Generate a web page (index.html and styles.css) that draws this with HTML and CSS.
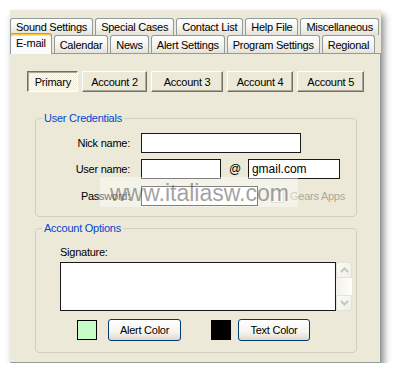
FILE: index.html
```html
<!DOCTYPE html>
<html>
<head>
<meta charset="utf-8">
<link rel="stylesheet" href="styles.css">
</head>
<body>
<div class="window">
  <div class="tabrow back">
    <div class="tab">Sound Settings</div>
    <div class="tab">Special Cases</div>
    <div class="tab">Contact List</div>
    <div class="tab">Help File</div>
    <div class="tab">Miscellaneous</div>
  </div>
  <div class="tabrow front">
    <div class="tab sel">E-mail</div>
    <div class="tab">Calendar</div>
    <div class="tab">News</div>
    <div class="tab">Alert Settings</div>
    <div class="tab">Program Settings</div>
    <div class="tab">Regional</div>
  </div>
  <div class="panel">
    <div class="accounts">
      <button class="acct pressed w-primary">Primary</button>
      <button class="acct w-a2">Account 2</button>
      <button class="acct w-a3">Account 3</button>
      <button class="acct w-a4">Account 4</button>
      <button class="acct w-a5">Account 5</button>
    </div>
    <fieldset class="group creds">
      <legend>User Credentials</legend>
      <div class="row">
        <span class="lbl">Nick name:</span>
        <span class="input w-nick"></span>
      </div>
      <div class="row">
        <span class="lbl">User name:</span>
        <span class="input w-user"></span>
        <span class="at">@</span>
        <span class="input w-domain">gmail.com</span>
      </div>
      <div class="row row-pass">
        <span class="lbl">Password:</span>
        <span class="input w-pass"></span>
        <span class="check"></span>
        <span class="disabled">Gears Apps</span>
      </div>
    </fieldset>
    <fieldset class="group options">
      <legend>Account Options</legend>
      <div class="opt-body">
        <div class="sig-label">Signature:</div>
        <div class="sig-row">
          <div class="textarea"></div>
          <div class="scrollbar">
            <div class="sb-btn">
              <svg width="9" height="6" viewBox="0 0 9 6"><path d="M1 5 L4.5 1.5 L8 5" fill="none" stroke="#C9C7BA" stroke-width="2"/></svg>
            </div>
            <div class="sb-track"></div>
            <div class="sb-btn">
              <svg width="9" height="6" viewBox="0 0 9 6"><path d="M1 1 L4.5 4.5 L8 1" fill="none" stroke="#C9C7BA" stroke-width="2"/></svg>
            </div>
          </div>
        </div>
        <div class="color-row">
          <span class="swatch green"></span>
          <button class="xpbtn w-alert">Alert Color</button>
          <span class="swatch black"></span>
          <button class="xpbtn w-text">Text Color</button>
        </div>
      </div>
    </fieldset>
  </div>
  <div class="watermark">www.italiasw.com</div>
</div>
</body>
</html>
```

FILE: styles.css
```css
html, body {
  margin: 0;
  padding: 0;
  background: #ffffff;
}
body {
  font-family: "Liberation Sans", Arial, sans-serif;
  font-size: 11px;
  letter-spacing: -0.25px;
  color: #000;
}
.window {
  position: relative;
  margin: 10px 0 0 10px;
  width: 371px;
  height: 353px;
  box-sizing: border-box;
  padding-top: 8px;
  background: #ECE9D8;
  box-shadow: 3px 5px 7px rgba(0, 0, 0, 0.45);
  display: flex;
  flex-direction: column;
}
.tabrow {
  display: flex;
  width: 360px;
}
.tabrow.back {
  height: 17px;
}
.tabrow.front {
  height: 18px;
  position: relative;
  z-index: 1;
}
.tab {
  flex: 1 1 auto;
  display: flex;
  align-items: center;
  justify-content: center;
  box-sizing: border-box;
  padding: 0 5px;
  margin-right: 2px;
  border: 1px solid #919B9C;
  border-bottom: none;
  border-radius: 3px 3px 0 0;
  background: linear-gradient(#ffffff, #f4f3ee 55%, #e4e2d8);
  white-space: nowrap;
}
.tab:last-child {
  margin-right: 0;
}
.tab.sel {
  margin-top: -2px;
  height: 21px;
  background: #FCFCFE;
  border-top: 1px solid #E68B2C;
  box-shadow: inset 0 1px #FFC73C, inset 0 2px #FFE09A;
  padding-bottom: 2px;
}
.panel {
  flex: 1;
  box-sizing: border-box;
  border: 1px solid #919B9C;
  border-left-color: #ECE9D8;
  background: #ECE9D8;
  padding: 17px 16px 0 16px;
}
.accounts {
  display: flex;
  gap: 4px;
}
.acct {
  height: 21px;
  box-sizing: border-box;
  padding: 0;
  margin: 0;
  font: inherit;
  letter-spacing: inherit;
  color: #000;
  background: #ECE9D8;
  border: 1px solid;
  border-color: #ffffff #716F64 #716F64 #ffffff;
  box-shadow: inset -1px -1px #ACA899;
}
.acct.pressed {
  border-color: #716F64 #ffffff #ffffff #716F64;
  box-shadow: inset 1px 1px #ACA899;
  background: repeating-conic-gradient(#ffffff 0 25%, #ECE9D8 0 50%) 0 0 / 2px 2px;
  padding: 1px 0 0 1px;
}
.w-primary { width: 51px; }
.w-a2 { width: 66px; }
.w-a3 { width: 72px; }
.w-a4 { width: 67px; }
.w-a5 { width: 67px; }

.group {
  margin: 0 0 0 8px;
  width: 322px;
  min-width: 0;
  box-sizing: border-box;
  border: 1px solid #D0D0BF;
  border-radius: 4px;
  padding: 0;
}
.group legend {
  color: #0046D5;
  padding: 0 2px;
  margin-left: 6px;
  line-height: 13px;
}
.creds {
  margin-top: 20px;
  height: 105px;
  padding-top: 8px;
  display: flex;
  flex-direction: column;
  gap: 6px;
}
.row {
  display: flex;
  align-items: center;
  height: 20px;
}
.row-pass {
  margin-top: 1px;
}
.lbl {
  width: 94px;
  text-align: right;
  margin-right: 11px;
}
.input {
  height: 20px;
  box-sizing: border-box;
  border: 1px solid #1a1a1a;
  background: #ffffff;
  font-size: 12px;
  letter-spacing: 0;
  line-height: 18px;
  padding-left: 3px;
}
.w-nick { width: 160px; }
.w-user { width: 80px; }
.w-domain { width: 92px; }
.w-pass { width: 117px; }
.at {
  margin: 0 7px 0 8px;
  font-size: 12px;
}
.check {
  width: 13px;
  height: 13px;
  box-sizing: border-box;
  border: 1px solid #C9C7BA;
  background: #F4F3EE;
  margin-left: 13px;
}
.disabled {
  color: #ACA899;
  margin-left: 6px;
}
.options {
  margin-top: 5px;
  height: 131px;
  padding-top: 11px;
}
.opt-body {
  margin-left: 24px;
}
.sig-label {
  line-height: 13px;
  margin-bottom: 3px;
}
.sig-row {
  display: flex;
  height: 49px;
}
.textarea {
  width: 276px;
  box-sizing: border-box;
  border: 1px solid #1a1a1a;
  background: #ffffff;
}
.scrollbar {
  width: 16px;
  display: flex;
  flex-direction: column;
}
.sb-btn {
  height: 16px;
  box-sizing: border-box;
  border: 1px solid #E3E1D8;
  border-radius: 2px;
  background: linear-gradient(135deg, #FBFBF8, #EFEEE7);
  display: flex;
  align-items: center;
  justify-content: center;
}
.sb-track {
  flex: 1;
  background: linear-gradient(90deg, #F3F1EC, #FEFEFB);
}
.color-row {
  display: flex;
  align-items: center;
  margin-top: 8px;
}
.swatch {
  width: 20px;
  height: 20px;
  box-sizing: border-box;
  border: 1px solid #000;
}
.swatch.green {
  background: #C6FCC6;
  margin-left: 17px;
}
.swatch.black {
  background: #000;
  margin-left: 30px;
}
.xpbtn {
  height: 22px;
  box-sizing: border-box;
  padding: 0;
  font: inherit;
  letter-spacing: inherit;
  color: #000;
  border: 1px solid #003C74;
  border-radius: 3px;
  background: linear-gradient(#ffffff, #f5f4ef 60%, #dcd8cc);
}
.w-alert { width: 73px; margin-left: 11px; }
.w-text { width: 72px; margin-left: 7px; }

.watermark {
  position: absolute;
  left: 90px;
  top: 167px;
  width: 198px;
  height: 30px;
  box-sizing: border-box;
  padding-left: 10px;
  background: rgba(255, 255, 255, 0.45);
  color: rgba(70, 70, 70, 0.5);
  font-size: 23px;
  line-height: 32px;
  letter-spacing: 0;
  white-space: nowrap;
}
```
